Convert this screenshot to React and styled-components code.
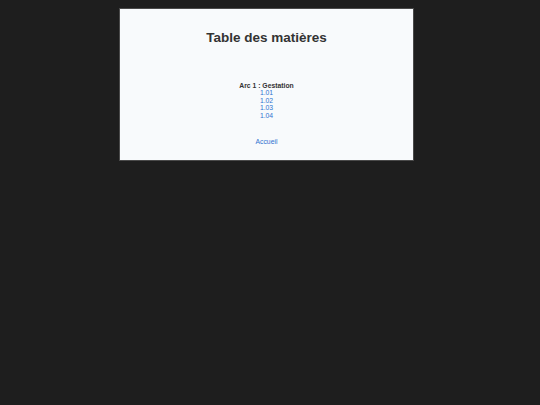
import React from 'react';
import styled, { createGlobalStyle } from 'styled-components';

const GlobalStyle = createGlobalStyle`
    html, body {
        margin: 0;
        padding: 0;
        background: #1e1e1e;
    }
    body {
        font-family: "Liberation Sans", Arial, sans-serif;
    }
`

const chapters = ['1.01', '1.02', '1.03', '1.04'];

function App() {
    return (
        <Page>
            <GlobalStyle />
            <Panel>
                <Title>Table des matières</Title>
                <Arc>
                    <ArcName>Arc 1 : Gestation</ArcName>
                    {chapters.map((c) => (
                        <ChapterLink key={c} href="#">{c}</ChapterLink>
                    ))}
                </Arc>
                <HomeLink href="#">Accueil</HomeLink>
            </Panel>
        </Page>
    );
}

export default App;

const Page = styled.div`
    min-height: 405px;
    padding: 8px 0 0 119px;
    box-sizing: border-box;
`

const Panel = styled.div`
    box-sizing: border-box;
    width: 295px;
    height: 153px;
    background: #f8fafc;
    border: 1px solid #4a4a4a;
    padding-top: 21px;
    display: flex;
    flex-direction: column;
    align-items: center;
    text-align: center;
`

const Title = styled.h1`
    margin: 0;
    font-size: 13.5px;
    font-weight: 700;
    color: #333333;
    line-height: 15.5px;
`

const Arc = styled.div`
    margin-top: 36px;
    display: flex;
    flex-direction: column;
    align-items: center;
    font-size: 6.8px;
    line-height: 7.6px;
`

const ArcName = styled.div`
    font-weight: 700;
    color: #333333;
`

const ChapterLink = styled.a`
    color: #2f72d0;
    text-decoration: none;
`

const HomeLink = styled.a`
    margin-top: 18.5px;
    font-size: 6.8px;
    line-height: 7.6px;
    color: #2f72d0;
    text-decoration: none;
`
